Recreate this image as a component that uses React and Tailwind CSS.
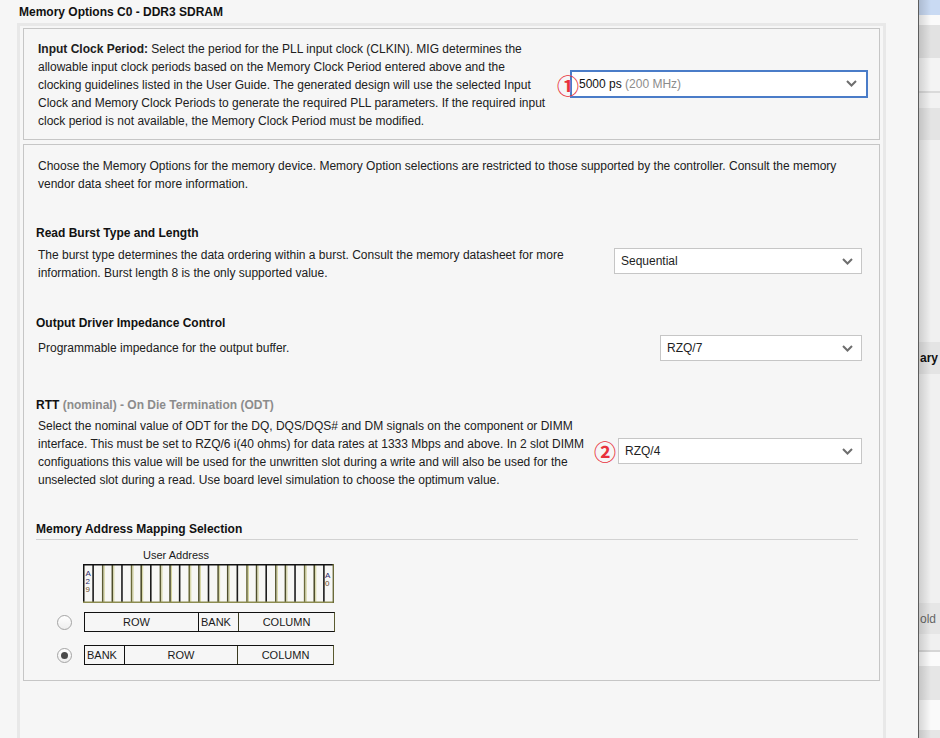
import React from "react";

const Chevron = () => (
  <svg width="11" height="7" viewBox="0 0 11 7" className="shrink-0">
    <path d="M1 1 L5.5 5.5 L10 1" fill="none" stroke="#6e6e6e" strokeWidth="2" />
  </svg>
);

function Select({ className, children }) {
  return (
    <div className={"h-[26px] bg-white border border-[#c6c6c6] flex items-center justify-between pl-[6px] pr-[8px] " + className}>
      <span className="text-[12px] text-[#1e1e1e] leading-[14px]">{children}</span>
      <Chevron />
    </div>
  );
}

function Circled({ children, className }) {
  return (
    <span className={"absolute text-[22px] leading-[22px] font-bold text-[#e8323c] font-['Noto_Sans_CJK_SC',sans-serif] " + className}>
      {children}
    </span>
  );
}

function AddressBar() {
  const n = 26;
  const w = 250;
  const cw = w / n;
  const dark = ["#4e4e2c", "#1c1c1c", "#5b5b35", "#4e4e2c", "#1c1c1c", "#6a6a3a"];
  const lines = [];
  for (let i = 1; i < n; i++) {
    const x = 0.5 + i * cw;
    lines.push(
      <line key={"a" + i} x1={x} y1={1} x2={x} y2={38} stroke={dark[i % dark.length]} strokeWidth="1.6" />
    );
    if (i % 3 !== 1 && i !== n - 1) {
      lines.push(
        <line key={"b" + i} x1={x + 1.5} y1={1} x2={x + 1.5} y2={38} stroke="#d2d29a" strokeWidth="1" />
      );
    }
  }
  return (
    <svg width="252" height="40" viewBox="0 0 252 40" className="block">
      <rect x="0" y="0" width="251" height="39" fill="#f7f7f5" />
      {lines}
      <line x1="0" y1="0.75" x2="251" y2="0.75" stroke="#111" strokeWidth="1.5" />
      <line x1="0.75" y1="0" x2="0.75" y2="39" stroke="#111" strokeWidth="1.5" />
      <line x1="0" y1="38.3" x2="251" y2="38.3" stroke="#8c8c50" strokeWidth="1.6" />
      <line x1="250.3" y1="0" x2="250.3" y2="39" stroke="#6b6b3a" strokeWidth="1.4" />
      <g fontFamily="Liberation Sans, Arial, sans-serif" fontSize="8">
        <text x="2.5" y="12" fill="#2a2a6a">A</text>
        <text x="2.5" y="20" fill="#2a2a6a">2</text>
        <text x="2.5" y="28" fill="#6a4a2a">9</text>
        <text x="242" y="14" fill="#2a2a6a">A</text>
        <text x="242" y="22" fill="#6a4a2a">0</text>
      </g>
    </svg>
  );
}

function Radio({ checked }) {
  return (
    <div className="w-[15px] h-[15px] rounded-full border border-[#a4a4a4] bg-linear-to-b from-white to-[#eeeeee] flex items-center justify-center shrink-0">
      {checked && <div className="w-[7px] h-[7px] rounded-full bg-[#4a4a4a]" />}
    </div>
  );
}

function Cell({ className, children }) {
  return (
    <div className={"h-full flex items-center text-[11px] leading-[12px] text-[#1a1a1a] " + className}>{children}</div>
  );
}

export default function App() {
  return (
    <div className="w-[940px] h-[738px] flex overflow-hidden bg-[#f6f6f6] font-['Liberation_Sans',Arial,sans-serif] text-[#202020]">
      {/* main dialog */}
      <div className="w-[918px] h-full flex flex-col shrink-0">
        <div className="h-[23px] pl-[19px] pt-[5px] text-[12px] leading-[14px] font-bold text-[#111]">
          Memory Options C0 - DDR3 SDRAM
        </div>
        <div className="ml-[17px] w-[869px] flex-1 border-[3px] border-b-0 border-[#e8e8e8] pt-[2px] px-[3px] flex flex-col gap-[4px]">
          {/* box 1 */}
          <div className="h-[112px] border border-[#c6c6c6] flex items-center pl-[14px]">
            <div className="w-[532px] text-[12px] leading-[18px] pt-[1px] whitespace-nowrap">
              <div>
                <span className="font-bold">Input Clock Period:</span> Select the period for the PLL input clock (CLKIN). MIG determines the
              </div>
              <div>allowable input clock periods based on the Memory Clock Period entered above and the</div>
              <div>clocking guidelines listed in the User Guide. The generated design will use the selected Input</div>
              <div>Clock and Memory Clock Periods to generate the required PLL parameters. If the required input</div>
              <div>clock period is not available, the Memory Clock Period must be modified.</div>
            </div>
            <div className="relative mt-[-1px]">
              <div className="w-[298px] h-[28px] bg-white border-2 border-[#4a7cc8] flex items-center justify-between pl-[7px] pr-[9px]">
                <span className="text-[12px] leading-[14px] text-[#111]">
                  5000 ps <span className="text-[#8c8c8c]">(200 MHz)</span>
                </span>
                <Chevron />
              </div>
              <Circled className="left-[-13px] top-[3px]">①</Circled>
            </div>
          </div>

          {/* box 2 */}
          <div className="h-[537px] border border-[#c6c6c6] pl-[12px] pt-[12px] flex flex-col">
            <div className="ml-[2px] text-[12px] leading-[18px] whitespace-nowrap">
              <div>Choose the Memory Options for the memory device. Memory Option selections are restricted to those supported by the controller. Consult the memory</div>
              <div>vendor data sheet for more information.</div>
            </div>

            <div className="mt-[31px] text-[12px] leading-[18px] font-bold text-[#111]">Read Burst Type and Length</div>
            <div className="mt-[4px] flex items-start">
              <div className="ml-[2px] w-[576px] text-[12px] leading-[18px] whitespace-nowrap">
                <div>The burst type determines the data ordering within a burst. Consult the memory datasheet for more</div>
                <div>information. Burst length 8 is the only supported value.</div>
              </div>
              <Select className="w-[248px] mt-[2px]">Sequential</Select>
            </div>

            <div className="mt-[32px] text-[12px] leading-[18px] font-bold text-[#111]">Output Driver Impedance Control</div>
            <div className="mt-[3px] flex items-center">
              <div className="ml-[2px] w-[622px] text-[12px] leading-[18px] whitespace-nowrap">
                Programmable impedance for the output buffer.
              </div>
              <Select className="w-[202px]">RZQ/7</Select>
            </div>

            <div className="mt-[35px] text-[12px] leading-[18px] font-bold text-[#111]">
              RTT <span className="text-[#8c8c8c]">(nominal) - On Die Termination (ODT)</span>
            </div>
            <div className="mt-[3px] flex items-start">
              <div className="ml-[2px] w-[580px] text-[12px] leading-[18px] whitespace-nowrap">
                <div>Select the nominal value of ODT for the DQ, DQS/DQS# and DM signals on the component or DIMM</div>
                <div>interface. This must be set to RZQ/6 i(40 ohms) for data rates at 1333 Mbps and above. In 2 slot DIMM</div>
                <div>configuations this value will be used for the unwritten slot during a write and will also be used for the</div>
                <div>unselected slot during a read. Use board level simulation to choose the optimum value.</div>
              </div>
              <div className="relative mt-[21px]">
                <Select className="w-[244px]">RZQ/4</Select>
                <Circled className="left-[-24px] top-[1px]">②</Circled>
              </div>
            </div>

            <div className="mt-[31px] w-[822px] border-b border-[#d2d2d2] text-[12px] leading-[19px] font-bold text-[#111]">
              Memory Address Mapping Selection
            </div>
            <div className="mt-[8px] ml-[107px] text-[11px] leading-[14px] text-[#1a1a1a]">User Address</div>
            <div className="mt-[2px] ml-[47px]">
              <AddressBar />
            </div>
            <div className="mt-[8px] flex items-center">
              <div className="ml-[21px]">
                <Radio />
              </div>
              <div className="ml-[12px] w-[251px] h-[20px] border-[1.5px] border-[#111] border-r-[#5b5b30] flex">
                <Cell className="w-[113px] justify-center pr-[10px]">ROW</Cell>
                <Cell className="w-[40px] border-l-[1.5px] border-[#111] pl-[2px]">BANK</Cell>
                <Cell className="flex-1 border-l-[1.5px] border-[#3a3a20] justify-center">COLUMN</Cell>
              </div>
            </div>
            <div className="mt-[13px] flex items-center">
              <div className="ml-[21px]">
                <Radio checked />
              </div>
              <div className="ml-[12px] w-[250px] h-[20px] border-[1.5px] border-[#111] border-r-[#5b5b30] flex">
                <Cell className="w-[39px] pl-[2px]">BANK</Cell>
                <Cell className="w-[113px] border-l-[1.5px] border-[#111] justify-center">ROW</Cell>
                <Cell className="flex-1 border-l-[1.5px] border-[#3a3a20] justify-center">COLUMN</Cell>
              </div>
            </div>
          </div>
        </div>
      </div>

      {/* background window strip */}
      <div className="relative flex-1 h-full border-l border-[#5c5c5c] flex flex-col overflow-hidden text-[12px]">
        <div className="h-[15px] bg-[#c9daf3]" />
        <div className="h-[10px] bg-[#fafafa]" />
        <div className="h-[33px] bg-[#e2e2e2]" />
        <div className="h-[33px] bg-[#f4f4f4]" />
        <div className="h-[2px] bg-[#dadada]" />
        <div className="h-[15px] bg-[#f2f2f2]" />
        <div className="h-[32px] bg-[#e4e4e4]" />
        <div className="h-[202px] bg-[#f0f0f0]" />
        <div className="h-[32px] bg-[#e4e4e4] flex items-center pl-[1px] font-bold text-[#111] whitespace-nowrap">
          ary
        </div>
        <div className="h-[229px] bg-[#f0f0f0]" />
        <div className="h-[31px] bg-[#e6e6e6] flex items-center pl-[1px] text-[#666] whitespace-nowrap">
          old
        </div>
        <div className="h-[16px] bg-[#f0f0f0]" />
        <div className="h-[2px] bg-[#d6d6d6]" />
        <div className="h-[14px] bg-[#fbfbfb]" />
        <div className="h-[34px] bg-[#e6e6e6]" />
        <div className="h-[30px] bg-[#fafafa]" />
        <div className="flex-1 bg-[#e6e6e6]" />
        <div className="absolute left-0 top-0 bottom-0 w-[12px] bg-linear-to-r from-[rgba(0,0,0,0.14)] to-transparent" />
      </div>
    </div>
  );
}
